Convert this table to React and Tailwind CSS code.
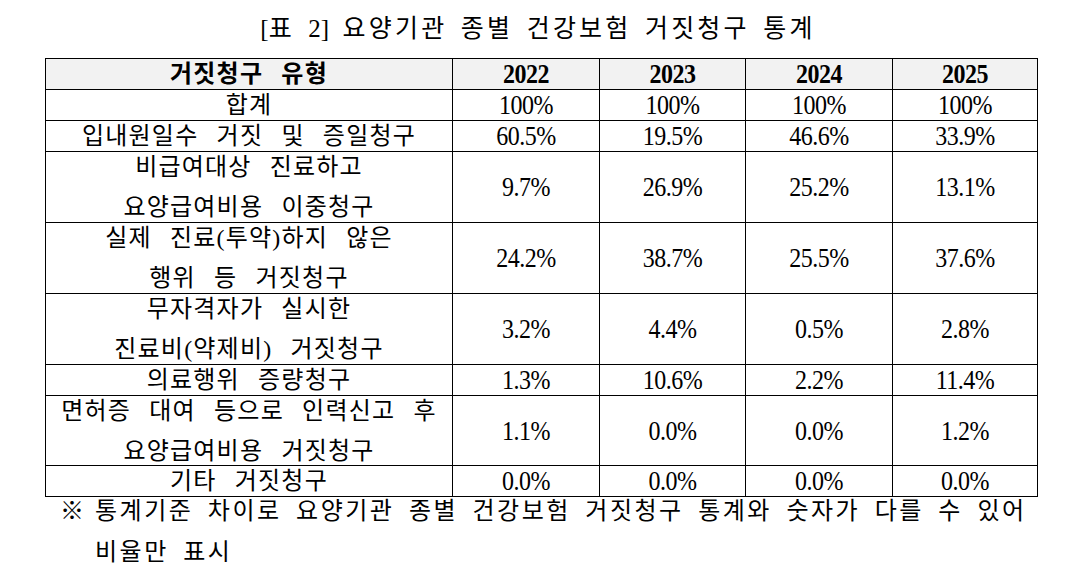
import React from "react";

const cols = ["2022", "2023", "2024", "2025"];

// w-[...] for the five columns, widths include the right border
const colW = ["w-[407px]", "w-[147px]", "w-[146px]", "w-[147px]", "w-[145px]"];

const rows = [
    { label: ["합계"], vals: ["100%", "100%", "100%", "100%"], h: "h-[31px]" },
    { label: ["입내원일수 거짓 및 증일청구"], vals: ["60.5%", "19.5%", "46.6%", "33.9%"], h: "h-[31px]" },
    { label: ["비급여대상 진료하고", "요양급여비용 이중청구"], vals: ["9.7%", "26.9%", "25.2%", "13.1%"], h: "h-[71px]" },
    { label: ["실제 진료(투약)하지 않은", "행위 등 거짓청구"], vals: ["24.2%", "38.7%", "25.5%", "37.6%"], h: "h-[71px]" },
    { label: ["무자격자가 실시한", "진료비(약제비) 거짓청구"], vals: ["3.2%", "4.4%", "0.5%", "2.8%"], h: "h-[71px]" },
    { label: ["의료행위 증량청구"], vals: ["1.3%", "10.6%", "2.2%", "11.4%"], h: "h-[31px]" },
    { label: ["면허증 대여 등으로 인력신고 후", "요양급여비용 거짓청구"], vals: ["1.1%", "0.0%", "0.0%", "1.2%"], h: "h-[70px]" },
    { label: ["기타 거짓청구"], vals: ["0.0%", "0.0%", "0.0%", "0.0%"], h: "h-[31px]" },
];

// the numbers in the source are set in a narrow serif, so stretch them a bit
const Num = ({ children }) => (
    <span className="inline-block scale-y-[1.15] tracking-[-0.5px]">{children}</span>
);

function Row({ row }) {
    return (
        <div className="flex">
            <div className={`${colW[0]} ${row.h} border-r border-b border-black flex flex-col items-center justify-center text-[24px] tracking-[1.2px] [word-spacing:11px] leading-[40px]`}>
                {row.label.map((line, i) => (
                    <div key={i} className="whitespace-nowrap">{line}</div>
                ))}
            </div>
            {row.vals.map((v, i) => (
                <div key={i} className={`${colW[i + 1]} ${row.h} border-r border-b border-black flex items-center justify-center text-[24px]`}>
                    <Num>{v}</Num>
                </div>
            ))}
        </div>
    );
}

export default function App() {
    return (
        <div className="w-[1072px] h-[567px] bg-white text-black overflow-hidden font-['Liberation_Serif','Noto_Sans_CJK_KR',serif]">
            <div className="h-[58px] flex items-center justify-center pl-[4px] text-[25px]">
                <span className="whitespace-nowrap tracking-[3.2px] [word-spacing:4px]">
                    <span className="tracking-normal">[</span>표&nbsp;<span className="tracking-normal">2]</span> 요양기관 종별 건강보험 거짓청구 통계
                </span>
            </div>

            <div className="ml-[45px] w-[993px] border-l border-t border-black">
                <div className="flex bg-[#f2f2f2] font-bold">
                    <div className={`${colW[0]} h-[31px] border-r border-b border-black flex items-center justify-center text-[24px] tracking-[1.2px] [word-spacing:11px]`}>
                        거짓청구 유형
                    </div>
                    {cols.map((c, i) => (
                        <div key={c} className={`${colW[i + 1]} h-[31px] border-r border-b border-black flex items-center justify-center text-[24px]`}>
                            <Num>{c}</Num>
                        </div>
                    ))}
                </div>
                {rows.map((r, i) => (
                    <Row key={i} row={r} />
                ))}
            </div>

            <div className="-mt-[6px] ml-[60px] flex text-[24px] leading-[41px] tracking-[2.5px] [word-spacing:6px]">
                <div className="w-[35px] shrink-0">※</div>
                <div className="whitespace-nowrap">
                    통계기준 차이로 요양기관 종별 건강보험 거짓청구 통계와 숫자가 다를 수 있어
                    <br />
                    비율만 표시
                </div>
            </div>
        </div>
    );
}
